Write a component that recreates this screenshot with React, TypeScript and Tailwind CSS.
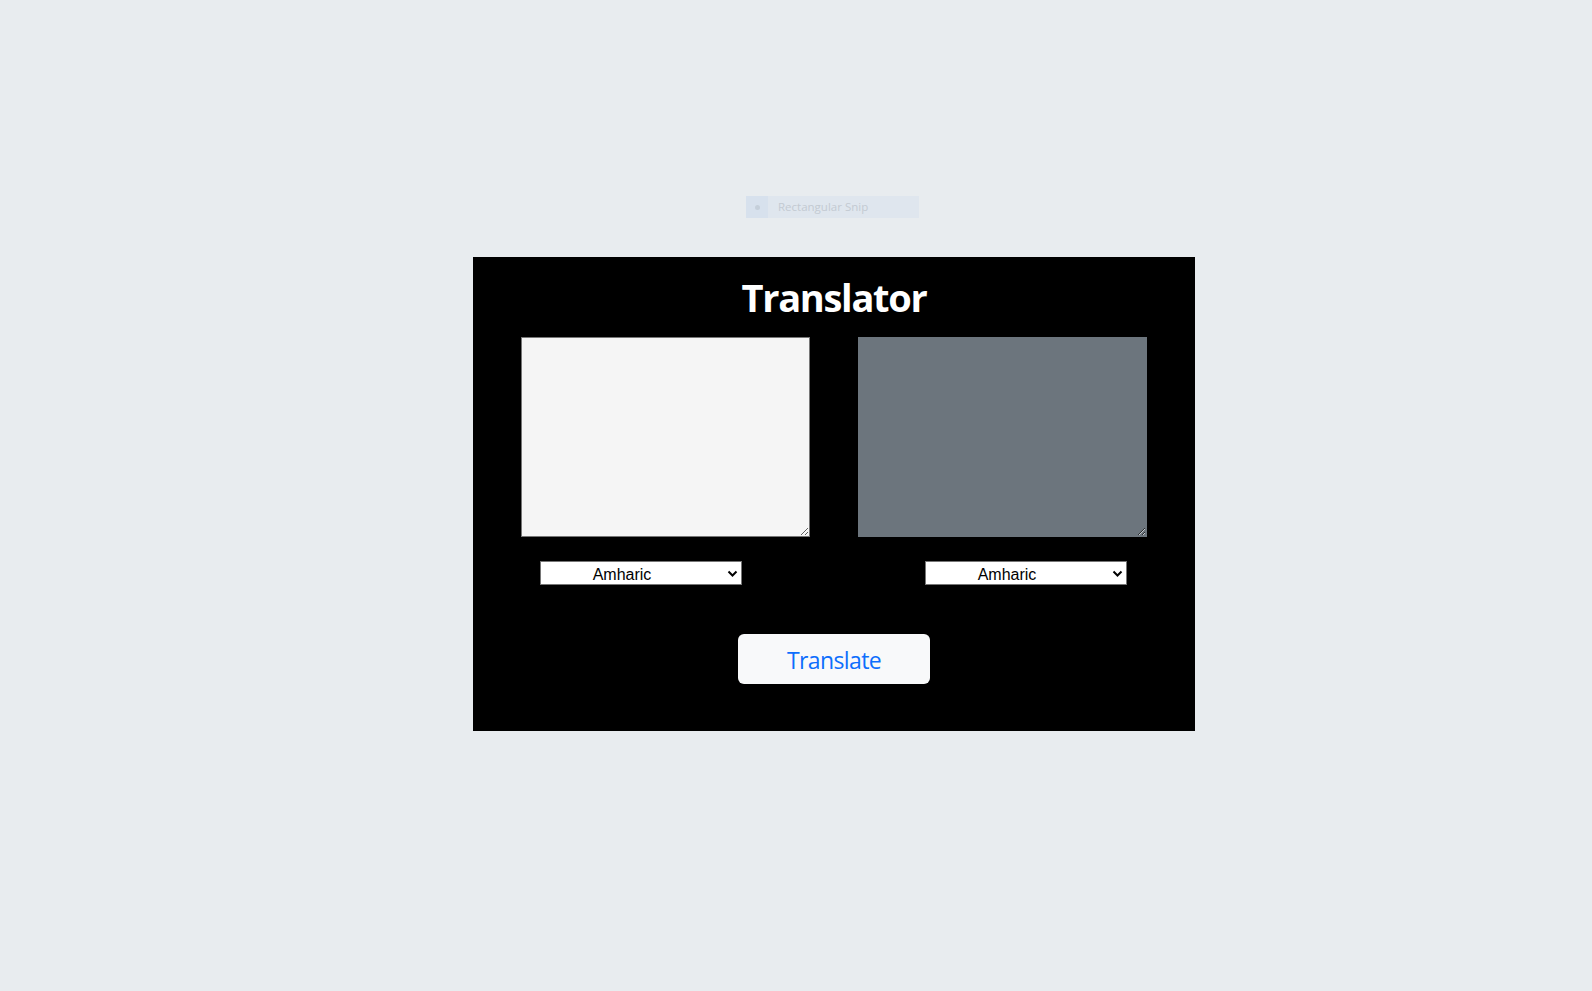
import React from "react";

function LangSelect() {
  return (
    <div className="relative w-[202px] h-[24px]">
      <select
        defaultValue="am"
        className="appearance-none w-full h-full bg-white border border-[#767676] text-black text-[16px] text-center pr-[38px] pt-[1px] outline-none"
        style={{ fontFamily: '"Liberation Sans", Arial, sans-serif' }}
      >
        <option value="am">Amharic</option>
        <option value="en">English</option>
      </select>
      <svg
        className="pointer-events-none absolute right-[4px] top-[9px]"
        width="11"
        height="8"
        viewBox="0 0 11 8"
      >
        <path d="M1.5 1.5 L5.5 5.5 L9.5 1.5" fill="none" stroke="#000" strokeWidth="2" />
      </svg>
    </div>
  );
}

export default function App() {
  return (
    <div
      className="min-h-[991px] w-full bg-[#e8ecef] flex flex-col"
      style={{ fontFamily: '"Open Sans", "Noto Sans", sans-serif' }}
    >
      <div className="mt-[196px] ml-[746px] w-[173px] h-[22px] bg-[#dfe6ee] flex items-center">
        <div className="w-[22px] h-full bg-[#d7e1ed] flex items-center justify-center">
          <div className="w-[5px] h-[5px] rounded-full bg-[#c5cfda]" />
        </div>
        <span className="ml-[10px] text-[11.5px] text-[#c3cad2] leading-none -mt-[1px]">Rectangular Snip</span>
      </div>

      <div className="mt-[39px] ml-[473px] w-[722px] h-[474px] bg-black flex flex-col items-center">
        <h1 className="mt-[15px] text-white font-bold text-[38px] leading-[50px] tracking-[-1.3px]">
          Translator
        </h1>
        <div className="mt-[15px] flex gap-[48px]">
          <textarea className="w-[289px] h-[200px] bg-[#f5f5f5] border border-[#767676] p-[2px] outline-none" />
          <textarea className="w-[289px] h-[200px] bg-[#6c757d] border border-[#6c757d] p-[2px] outline-none" />
        </div>
        <div className="mt-[24px] w-full flex justify-between pl-[67px] pr-[68px]">
          <LangSelect />
          <LangSelect />
        </div>
        <button className="mt-[49px] w-[192px] h-[50px] rounded-[6px] bg-[#f8f9fa] text-[#0d6efd] text-[23px] leading-none tracking-[-0.6px] pt-[3px]">
          Translate
        </button>
      </div>
    </div>
  );
}
